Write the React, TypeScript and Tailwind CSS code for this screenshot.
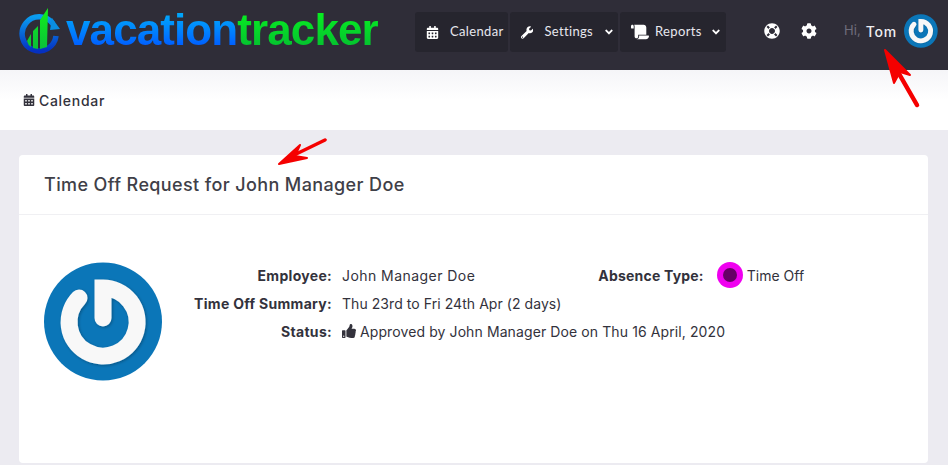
import { FaCalendarAlt, FaWrench, FaScroll, FaLifeRing, FaCog, FaThumbsUp, FaAngleDown } from "react-icons/fa";
import type { ReactNode } from "react";

function PowerAvatar({ size }: { size: number }) {
    return (
        <svg width={size} height={size} viewBox="0 0 119 119" className="shrink-0">
            <defs>
                <filter id="soft" x="-20%" y="-20%" width="140%" height="140%">
                    <feDropShadow dx="1" dy="1" stdDeviation="1.5" floodColor="#000" floodOpacity="0.3" />
                </filter>
            </defs>
            <circle cx="59" cy="59.5" r="59" fill="#0b76b8" />
            <g fill="none" stroke="#f8f8f8" strokeWidth="17" strokeLinecap="round" filter="url(#soft)">
                <path d="M35 36 A34 34 0 1 0 59 26 L59 56" />
            </g>
        </svg>
    );
}

function LogoMark() {
    return (
        <svg width="44" height="48" viewBox="0 0 44 48" className="shrink-0">
            <defs>
                <linearGradient id="ring" x1="0" y1="0" x2="0" y2="1">
                    <stop offset="0" stopColor="#0a9cf0" />
                    <stop offset="1" stopColor="#0530c0" />
                </linearGradient>
                <linearGradient id="bars" x1="0" y1="0" x2="0" y2="1">
                    <stop offset="0" stopColor="#12f01a" />
                    <stop offset="1" stopColor="#0ac03a" />
                </linearGradient>
            </defs>
            <path d="M35 18 A17 17 0 1 0 38 30" fill="none" stroke="url(#ring)" strokeWidth="5.5" />
            <path d="M34 12 L42 23 L32 24 Z" fill="#0a8ee0" />
            <path d="M9 35 L13 28 L13 41 Q10 39 9 35 Z M15 25 L20 20 L20 43 L15 42 Z M22 14 L30 2 L29 41 L22 43 Z" fill="url(#bars)" />
        </svg>
    );
}

function NavItem({ icon, label, menu, gap }: { icon: ReactNode; label: string; menu?: boolean; gap: string }) {
    return (
        <div className={`flex h-10 items-center rounded-[3px] bg-[#26252e] pl-[11px] text-[13px] text-[#e8e8ee] ${gap}`}>
            {icon}
            <span className="font-['Lato',sans-serif] tracking-[0.35px]">{label}</span>
            {menu && <FaAngleDown className="ml-auto mr-[4px] text-[12px] text-white" />}
        </div>
    );
}

function Row({ label, children, spacing }: { label: string; children: ReactNode; spacing: string }) {
    return (
        <div className="flex h-7 items-center">
            <span className="w-[150px] text-right font-bold tracking-[0.3px]">{label}</span>
            <span className={`ml-[10px] flex items-center ${spacing}`}>{children}</span>
        </div>
    );
}

export default function App() {
    return (
        <div className="relative h-[465px] w-[948px] overflow-hidden bg-[#ecebf1] font-['Inter',sans-serif] text-[#33323c]">
            {/* Top bar */}
            <header className="flex h-[70px] items-start bg-[#2f2d38]">
                <div className="flex w-[415px] items-center pl-[18px] pt-[5px]">
                    <LogoMark />
                    <span className="ml-[4px] font-['Liberation_Sans',sans-serif] text-[44px] font-bold leading-[50px] tracking-[-0.9px]">
                        <span className="bg-gradient-to-b from-[#06b8f8] to-[#0044ff] bg-clip-text text-transparent">vacation</span>
                        <span className="bg-gradient-to-b from-[#08f818] to-[#04b830] bg-clip-text text-transparent">tracker</span>
                    </span>
                </div>
                <nav className="mt-3 flex gap-[2px]">
                    <NavItem gap="w-[93px] gap-[11px]" label="Calendar" icon={<FaCalendarAlt className="text-[13px] text-white" />} />
                    <NavItem gap="w-[108px] gap-[11px]" label="Settings" menu icon={<FaWrench className="text-[15px] text-white" />} />
                    <NavItem gap="w-[106px] gap-[6px]" label="Reports" menu icon={<FaScroll className="text-[18px] text-white" />} />
                </nav>
                <div className="ml-auto mr-[10px] mt-[14px] flex items-center">
                    <FaLifeRing className="text-[16px] text-white" />
                    <FaCog className="ml-[21px] text-[16px] text-white" />
                    <span className="ml-[27px] text-[13px] text-[#6f6e7c]">Hi,</span>
                    <span className="ml-[5px] text-[14px] font-medium tracking-[0.8px] text-[#eeeef2]">Tom</span>
                    <span className="ml-[7px]">
                        <PowerAvatar size={34} />
                    </span>
                </div>
            </header>

            {/* Breadcrumb */}
            <div className="flex h-[60px] items-center bg-gradient-to-b from-[#f5f5f8] to-white to-50% pl-[23px] text-[14px] font-medium">
                <FaCalendarAlt className="mr-[4px] text-[12px]" />
                <span className="tracking-[0.7px]">Calendar</span>
            </div>

            {/* Request card */}
            <main className="px-[19px] pt-[25px] pr-[20px]">
                <section className="h-[308px] rounded-[4px] bg-white">
                    <h1 className="flex h-[60px] items-center border-b border-[#f0f0f3] pl-[25px] text-[18px] font-medium text-[#3f4048] tracking-[0.38px]">
                        Time Off Request for John Manager Doe
                    </h1>
                    <div className="flex pl-[25px] pt-[47px] text-[14px]">
                        <PowerAvatar size={119} />
                        <div className="ml-[19px] -mt-[1px]">
                            <div className="flex">
                                <Row label="Employee:" spacing="tracking-[0.45px]">John Manager Doe</Row>
                                <div className="ml-[123px] flex h-7 items-center">
                                    <span className="font-bold tracking-[0.2px]">Absence Type:</span>
                                    <span className="ml-[13px] flex size-[26px] items-center justify-center rounded-full bg-[#f000f0]">
                                        <span className="size-[14px] rounded-full bg-[#660066]" />
                                    </span>
                                    <span className="ml-[4px]">Time Off</span>
                                </div>
                            </div>
                            <Row label="Time Off Summary:" spacing="tracking-[0.06px]">Thu 23rd to Fri 24th Apr (2 days)</Row>
                            <Row label="Status:" spacing="tracking-[0.1px]">
                                <FaThumbsUp className="mr-[4px] text-[14px]" />
                                Approved by John Manager Doe on Thu 16 April, 2020
                            </Row>
                        </div>
                    </div>
                </section>
            </main>

            {/* Annotation arrows */}
            <svg className="absolute left-[880px] top-[45px]" width="45" height="66" viewBox="0 0 45 66" fill="none" stroke="#f50000" strokeLinecap="round" strokeLinejoin="round">
                <path d="M37 60 L14 20" strokeWidth="4.5" />
                <path d="M5 5 L14 38 L20 27 L30 30 Z" fill="#f50000" strokeWidth="2" />
            </svg>
            <svg className="absolute left-[274px] top-[134px]" width="58" height="36" viewBox="0 0 58 36" fill="none" stroke="#f50000" strokeLinecap="round" strokeLinejoin="round">
                <path d="M51 6 L16 23" strokeWidth="3.5" />
                <path d="M5 30 L33 24 L21 22 L26 11 Z" fill="#f50000" strokeWidth="2" />
            </svg>
        </div>
    );
}
